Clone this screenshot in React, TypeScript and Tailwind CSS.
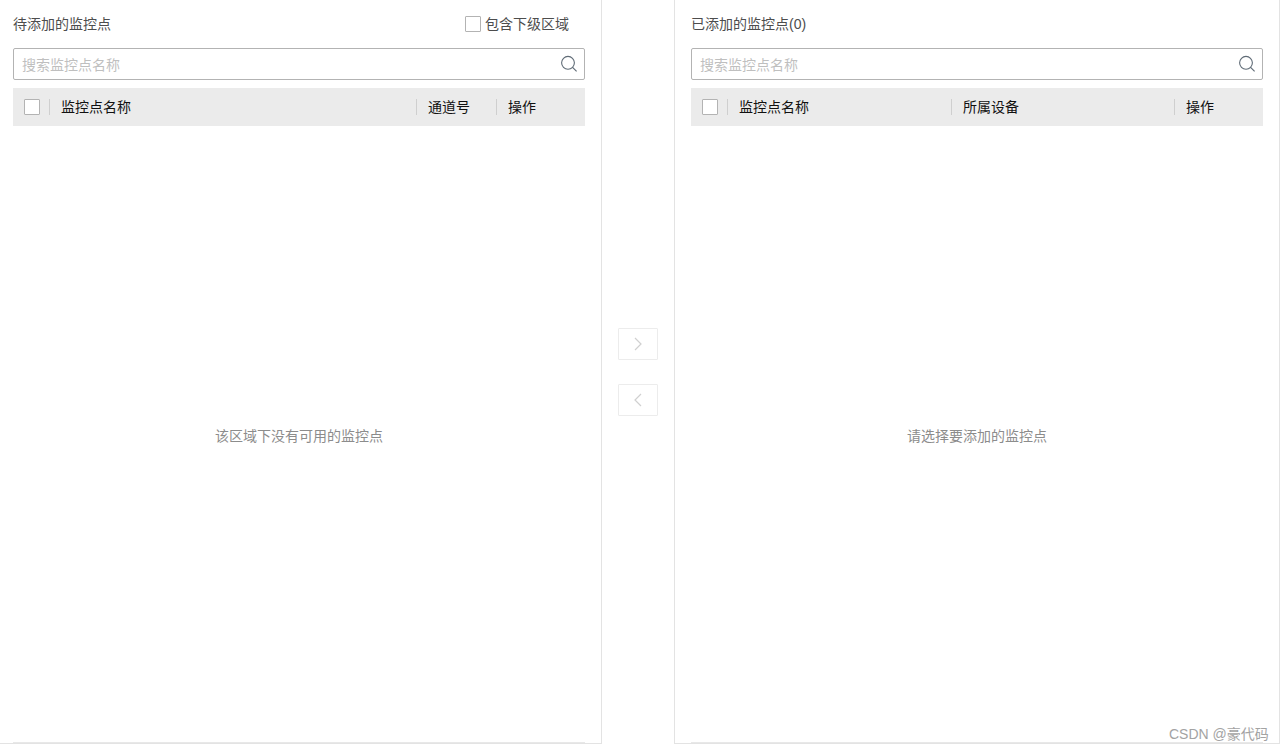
import React from "react";

const font = { fontFamily: '"Liberation Sans", "Noto Sans CJK SC", sans-serif' };

function Search() {
  return (
    <div className="h-8 mt-[12px] border border-[#b3b3b3] rounded-[2px] flex items-center justify-between pl-2 pr-[6px] bg-white">
      <span className="text-sm text-[#bfbfbf] leading-none pt-[2px]">搜索监控点名称</span>
      <svg width="18" height="18" viewBox="0 0 18 18" fill="none" stroke="#5f6b76" strokeWidth="1.1">
        <circle cx="8" cy="7.8" r="6.4" />
        <path d="M12.6 12.4 L16.6 16.4" />
      </svg>
    </div>
  );
}

function Box({ className = "" }: { className?: string }) {
  return <span className={`block w-4 h-4 border border-[#b3b3b3] bg-white rounded-[1px] shrink-0 ${className}`} />;
}

function Cell({ text, className }: { text: string; className: string }) {
  return (
    <div className={`flex items-center h-4 border-l border-[#cfcfcf] pl-[11px] text-sm text-[#111111] ${className}`}>
      {text}
    </div>
  );
}

function Panel({
  title,
  extra,
  cols,
  empty,
}: {
  title: string;
  extra?: React.ReactNode;
  cols: { text: string; className: string }[];
  empty: string;
}) {
  return (
    <section className="w-[572px] flex flex-col border-b border-[#e8e8e8]">
      <div className="h-[36px] pt-[12px] flex items-center justify-between text-sm text-[#4d4d4d] shrink-0">
        <span>{title}</span>
        {extra}
      </div>
      <Search />
      <div className="h-[38px] mt-2 bg-[#ebebeb] flex items-center pl-[11px] shrink-0">
        <Box className="mr-[9px]" />
        {cols.map((c) => (
          <Cell key={c.text} text={c.text} className={c.className} />
        ))}
      </div>
      <div className="flex-1 flex items-center justify-center text-sm text-[#8c8c8c] pt-[4px]">
        <span>{empty}</span>
      </div>
    </section>
  );
}

function Arrow({ dir }: { dir: "l" | "r" }) {
  return (
    <button className="w-10 h-8 border border-[#ececec] rounded-[1px] flex items-center justify-center bg-white">
      <svg width="10" height="14" viewBox="0 0 10 14" fill="none" stroke="#d0d0d0" strokeWidth="1.2">
        <path d={dir === "r" ? "M2 1 L8 7 L2 13" : "M8 1 L2 7 L8 13"} />
      </svg>
    </button>
  );
}

export default function App() {
  return (
    <div className="relative w-[1284px] h-[750px] bg-white overflow-hidden" style={font}>
      <div className="flex w-[1280px] h-[744px]">
        <div className="w-[602px] border-r border-b border-[#e3e3e3] pl-[13px] pr-[16px] flex shrink-0">
          <Panel
            title="待添加的监控点"
            extra={
              <label className="flex items-center gap-1 mr-[16px] text-sm text-[#4d4d4d]">
                <Box />
                包含下级区域
              </label>
            }
            cols={[
              { text: "监控点名称", className: "w-[367px]" },
              { text: "通道号", className: "w-[80px]" },
              { text: "操作", className: "flex-1" },
            ]}
            empty="该区域下没有可用的监控点"
          />
        </div>
        <div className="w-[72px] shrink-0 flex flex-col items-center justify-center gap-6">
          <Arrow dir="r" />
          <Arrow dir="l" />
        </div>
        <div className="flex-1 border-l border-r border-b border-[#e3e3e3] px-[16px] flex">
          <Panel
            title="已添加的监控点(0)"
            cols={[
              { text: "监控点名称", className: "w-[224px]" },
              { text: "所属设备", className: "w-[223px]" },
              { text: "操作", className: "flex-1" },
            ]}
            empty="请选择要添加的监控点"
          />
        </div>
      </div>
      <div className="absolute left-[1169px] top-[724px] text-sm leading-[20px] text-[#a3a3a3] whitespace-nowrap">
        CSDN @豪代码
      </div>
    </div>
  );
}
